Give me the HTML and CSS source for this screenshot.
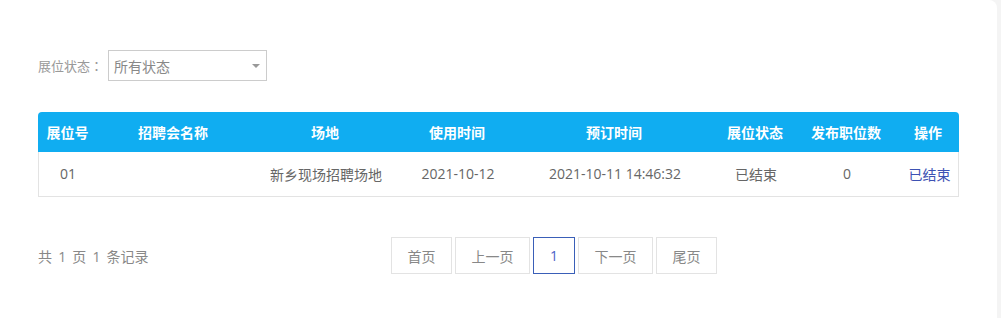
FILE: index.html
```html
<!DOCTYPE html>
<html lang="zh-CN">
<head>
<meta charset="utf-8">
<link rel="stylesheet" href="styles.css">
</head>
<body>
<div class="panel">
  <div class="filter">
    <span class="filter-label">展位状态<span class="colon" lang="zh-TW">：</span></span>
    <div class="select">
      <span>所有状态</span>
      <span class="caret"></span>
    </div>
  </div>
  <div class="table">
    <div class="row head">
      <div>展位号</div>
      <div>招聘会名称</div>
      <div>场地</div>
      <div>使用时间</div>
      <div>预订时间</div>
      <div>展位状态</div>
      <div>发布职位数</div>
      <div>操作</div>
    </div>
    <div class="row body">
      <div>01</div>
      <div></div>
      <div>新乡现场招聘场地</div>
      <div>2021-10-12</div>
      <div>2021-10-11 14:46:32</div>
      <div>已结束</div>
      <div>0</div>
      <div class="link">已结束</div>
    </div>
  </div>
  <div class="pager">
    <div class="info">共 1 页 1 条记录</div>
    <div class="pages">
      <span class="pg w61">首页</span>
      <span class="pg w75">上一页</span>
      <span class="pg w42 active">1</span>
      <span class="pg w75">下一页</span>
      <span class="pg w61">尾页</span>
    </div>
  </div>
</div>
</body>
</html>
```
FILE: styles.css
```css
* { box-sizing: border-box; }
html, body { margin: 0; padding: 0; }
body {
  background: #f4f4f4;
  font-family: "Open Sans", "Noto Sans CJK SC", sans-serif;
  color: #666;
  width: 1001px;
  height: 318px;
  overflow: hidden;
}
.panel {
  width: 997px;
  height: 318px;
  background: #fff;
  border-radius: 0 8px 0 0;
  padding: 50px 0 0 38px;
}
.filter {
  display: flex;
  align-items: center;
  height: 31px;
}
.filter-label {
  font-family: "Noto Sans CJK SC", sans-serif;
  font-size: 13px;
  color: #999;
  width: 70px;
}
.colon {
  font-family: "Noto Sans CJK TC", sans-serif;
}
.select {
  width: 159px;
  height: 31px;
  border: 1px solid #ccc;
  display: flex;
  align-items: center;
  justify-content: space-between;
  padding: 0 6px 0 5px;
  font-size: 14px;
  color: #888;
}
.caret {
  width: 0;
  height: 0;
  border-left: 4px solid transparent;
  border-right: 4px solid transparent;
  border-top: 4px solid #999;
}
.table {
  width: 921px;
  margin-top: 31px;
}
.row {
  display: grid;
  grid-template-columns: 59px 152px 152px 112px 202px 80px 102px 62px;
  align-items: center;
  text-align: center;
}
.head {
  height: 40px;
  background: #10adf1;
  color: #fff;
  font-weight: bold;
  font-size: 14px;
  border-radius: 4px 4px 0 0;
}
.body {
  height: 45px;
  border: 1px solid #e3e3e3;
  border-top: none;
  font-size: 14px;
  color: #666;
  padding-bottom: 1px;
}
.body > div:first-child { margin-left: -1px; }
.link { color: #3d52b3; margin-right: -1px; }
.pager {
  display: flex;
  align-items: center;
  margin-top: 40px;
  width: 921px;
}
.info {
  font-size: 14px;
  color: #888;
  width: 353px;
  word-spacing: 2.5px;
}
.pages {
  display: flex;
  gap: 3px;
}
.pg {
  height: 37px;
  border: 1px solid #e3e3e3;
  display: flex;
  align-items: center;
  justify-content: center;
  font-size: 14px;
  color: #888;
}
.w61 { width: 61px; }
.w75 { width: 75px; }
.w42 { width: 42px; }
.pg.active {
  border-color: #3a5fb8;
  color: #4a5fc6;
}
```
